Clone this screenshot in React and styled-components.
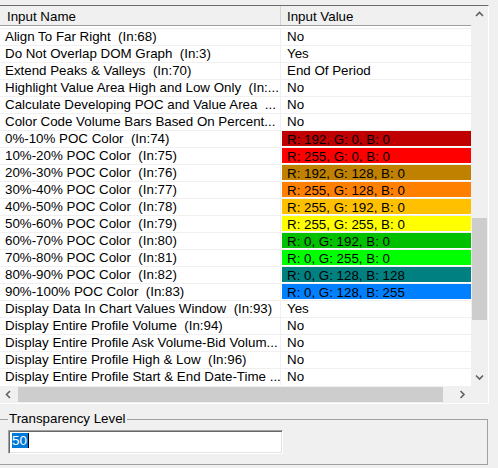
import React from "react";
import styled, { createGlobalStyle } from "styled-components";

const GlobalStyle = createGlobalStyle`
  html, body {
    margin: 0;
    padding: 0;
    background: #f0f0f0;
  }
  body {
    font-family: "Liberation Sans", Arial, sans-serif;
    font-size: 13.33px;
    color: #000;
  }
`;

const rows = [
  { name: "Align To Far Right  (In:68)", value: "No" },
  { name: "Do Not Overlap DOM Graph  (In:3)", value: "Yes" },
  { name: "Extend Peaks & Valleys  (In:70)", value: "End Of Period" },
  { name: "Highlight Value Area High and Low Only  (In:...", value: "No" },
  { name: "Calculate Developing POC and Value Area  ...", value: "No" },
  { name: "Color Code Volume Bars Based On Percent...", value: "No" },
  { name: "0%-10% POC Color  (In:74)", value: "R: 192, G: 0, B: 0", color: "rgb(192,0,0)" },
  { name: "10%-20% POC Color  (In:75)", value: "R: 255, G: 0, B: 0", color: "rgb(255,0,0)" },
  { name: "20%-30% POC Color  (In:76)", value: "R: 192, G: 128, B: 0", color: "rgb(192,128,0)" },
  { name: "30%-40% POC Color  (In:77)", value: "R: 255, G: 128, B: 0", color: "rgb(255,128,0)" },
  { name: "40%-50% POC Color  (In:78)", value: "R: 255, G: 192, B: 0", color: "rgb(255,192,0)" },
  { name: "50%-60% POC Color  (In:79)", value: "R: 255, G: 255, B: 0", color: "rgb(255,255,0)" },
  { name: "60%-70% POC Color  (In:80)", value: "R: 0, G: 192, B: 0", color: "rgb(0,192,0)" },
  { name: "70%-80% POC Color  (In:81)", value: "R: 0, G: 255, B: 0", color: "rgb(0,255,0)" },
  { name: "80%-90% POC Color  (In:82)", value: "R: 0, G: 128, B: 128", color: "rgb(0,128,128)" },
  { name: "90%-100% POC Color  (In:83)", value: "R: 0, G: 128, B: 255", color: "rgb(0,128,255)" },
  { name: "Display Data In Chart Values Window  (In:93)", value: "Yes" },
  { name: "Display Entire Profile Volume  (In:94)", value: "No" },
  { name: "Display Entire Profile Ask Volume-Bid Volum...", value: "No" },
  { name: "Display Entire Profile High & Low  (In:96)", value: "No" },
  { name: "Display Entire Profile Start & End Date-Time ...", value: "No" },
];

const Page = styled.div`
  display: flex;
  flex-direction: column;
`;

const Panel = styled.div`
  margin-top: 5px;
  width: 488px;
  border-top: 1px solid #6b6b6b;
  border-right: 1px solid #fff;
  border-bottom: 1px solid #fff;
  display: grid;
  grid-template-columns: 471px 17px;
  grid-template-rows: 380px 17px;
`;

const Viewport = styled.div`
  background: #fff;
  overflow: hidden;
  display: flex;
  flex-direction: column;
`;

const Header = styled.div`
  display: grid;
  grid-template-columns: 281px 1fr;
  height: 19px;
  background: #f0f0f0;
  border-bottom: 1px solid #a0a0a0;
  flex-shrink: 0;
`;

const HeaderCell = styled.div`
  box-sizing: border-box;
  padding: 3px 0 0 ${(p) => p.$pad}px;
  line-height: 16px;
  white-space: nowrap;
  border-right: ${(p) => (p.$divider ? "1px solid #d5d5d5" : "none")};
`;

const Body = styled.div`
  padding-top: 2px;
  display: flex;
  flex-direction: column;
`;

const Row = styled.div`
  display: grid;
  grid-template-columns: 281px 1fr;
  height: 16px;
  border-top: 1px solid #f0f0f0;
  flex-shrink: 0;
`;

const NameCell = styled.div`
  box-sizing: border-box;
  padding-left: 5px;
  line-height: 16px;
  white-space: pre;
  overflow: hidden;
  border-right: 1px solid #f0f0f0;
`;

const ValueCell = styled.div`
  box-sizing: border-box;
  line-height: ${(p) => (p.$color ? "15px" : "16px")};
  height: ${(p) => (p.$color ? "15px" : "16px")};
  margin-left: ${(p) => (p.$color ? "1px" : "0")};
  padding-left: ${(p) => (p.$color ? "5px" : "6px")};
  padding-top: ${(p) => (p.$color ? "1px" : "0")};
  background: ${(p) => p.$color || "transparent"};
  white-space: nowrap;
  overflow: hidden;
`;

const VScroll = styled.div`
  background: #f0f0f0;
  display: flex;
  flex-direction: column;
  align-items: center;
`;

const HScroll = styled.div`
  background: #f0f0f0;
  display: flex;
  align-items: center;
`;

const ArrowBox = styled.div`
  width: 17px;
  height: 17px;
  display: flex;
  align-items: center;
  justify-content: center;
  flex-shrink: 0;
`;

const VThumb = styled.div`
  width: 15px;
  height: 102px;
  margin-top: 195px;
  margin-right: 1px;
  background: #cdcdcd;
`;

const Spacer = styled.div`
  flex: 1;
`;

const HThumb = styled.div`
  height: 15px;
  width: 425px;
  margin-left: 1px;
  background: #cdcdcd;
`;

const Corner = styled.div`
  background: #f0f0f0;
`;

const Group = styled.fieldset`
  margin: 7px 0 0 -1px;
  width: 489px;
  box-sizing: border-box;
  padding: 3px 8px 10px 8px;
  border: 1px solid #a0a0a0;
  border-radius: 0;
  min-width: 0;
`;

const Legend = styled.legend`
  padding: 0 1px;
  line-height: 16px;
`;

const TextBox = styled.div`
  width: 275px;
  height: 24px;
  box-sizing: border-box;
  background: #fff;
  border-top: 1px solid #a0a0a0;
  border-left: 1px solid #a0a0a0;
  border-right: 1px solid #fff;
  border-bottom: 1px solid #fff;
  box-shadow: inset 1px 1px 0 #696969, inset -1px -1px 0 #e3e3e3;
  padding: 2px 0 0 3px;
  line-height: 16px;
`;

const Selected = styled.span`
  background: #0078d7;
  color: #fff;
  display: inline-block;
  line-height: 15px;
  padding-right: 1px;
`;

const Caret = styled.span`
  display: inline-block;
  width: 1px;
  height: 15px;
  background: #000;
  vertical-align: top;
`;

const Chevron = ({ dir }) => {
  const pts = {
    up: "1,5 4.5,1.5 8,5",
    down: "1,1.5 4.5,5 8,1.5",
    left: "5,1 1.5,4.5 5,8",
    right: "1.5,1 5,4.5 1.5,8",
  }[dir];
  const vertical = dir === "up" || dir === "down";
  return (
    <svg width={vertical ? 9 : 7} height={vertical ? 7 : 9} viewBox={vertical ? "0 0 9 7" : "0 0 7 9"}>
      <polyline points={pts} fill="none" stroke="#606060" strokeWidth="1.6" />
    </svg>
  );
};

export default function App() {
  return (
    <Page>
      <GlobalStyle />
      <Panel>
        <Viewport>
          <Header>
            <HeaderCell $pad={7} $divider>Input Name</HeaderCell>
            <HeaderCell $pad={6}>Input Value</HeaderCell>
          </Header>
          <Body>
            {rows.map((r) => (
              <Row key={r.name}>
                <NameCell>{r.name}</NameCell>
                <ValueCell $color={r.color}>{r.value}</ValueCell>
              </Row>
            ))}
          </Body>
        </Viewport>
        <VScroll>
          <ArrowBox>
            <Chevron dir="up" />
          </ArrowBox>
          <VThumb />
          <Spacer />
          <ArrowBox>
            <Chevron dir="down" />
          </ArrowBox>
        </VScroll>
        <HScroll>
          <ArrowBox>
            <Chevron dir="left" />
          </ArrowBox>
          <HThumb />
          <Spacer />
          <ArrowBox>
            <Chevron dir="right" />
          </ArrowBox>
        </HScroll>
        <Corner />
      </Panel>
      <Group>
        <Legend>Transparency Level</Legend>
        <TextBox>
          <Selected>50</Selected>
          <Caret />
        </TextBox>
      </Group>
    </Page>
  );
}
